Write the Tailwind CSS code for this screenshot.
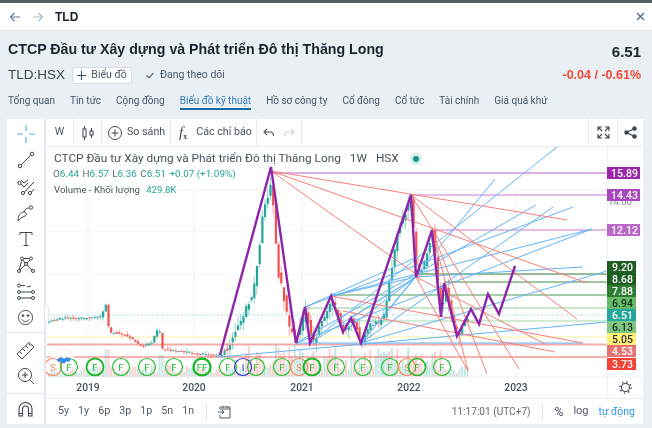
<!DOCTYPE html>
<html lang="vi">
<head>
  <meta charset="UTF-8">
  <title>TLD</title>
  <script src="https://cdn.jsdelivr.net/npm/@tailwindcss/browser@4"></script>
</head>
<body class="w-[652px] h-[428px] overflow-hidden bg-[#eaeff3] font-['Roboto','Liberation_Sans',sans-serif] text-[#3c4a5a] blur-[0.35px]">
  <div class="h-[3px] bg-[#5a5d60]"></div>

  <!-- thanh tren -->
  <div class="h-[28px] bg-white flex items-center pl-[9px] pr-[7px] border-b border-[#e2e6ea]">
    <svg class="w-[12px] h-[12px] text-[#5f7f9c]" viewBox="0 0 12 12" fill="none" stroke="currentColor" stroke-width="1.2"><path d="M11 6H1.5M5.5 2 1.5 6l4 4"/></svg>
    <svg class="w-[12px] h-[12px] ml-[11px] text-[#a9bac9]" viewBox="0 0 12 12" fill="none" stroke="currentColor" stroke-width="1.2"><path d="M1 6h9.5M6.5 2l4 4-4 4"/></svg>
    <span class="ml-[11px] text-[12px] font-bold text-[#17212b] font-['Liberation_Sans']">TLD</span>
    <svg class="ml-auto w-[9px] h-[9px] text-[#4e6b85]" viewBox="0 0 9 9" fill="none" stroke="currentColor" stroke-width="1.3"><path d="M1 1l7 7M8 1 1 8"/></svg>
  </div>

  <!-- tieu de -->
  <div class="h-[88px] px-[8px] pr-[11px] relative">
    <div class="flex items-center justify-between pt-[5px] h-[33px]">
      <h1 class="text-[14.2px] font-bold text-[#1b2530] font-['Liberation_Sans'] whitespace-nowrap">CTCP Đầu tư Xây dựng và Phát triển Đô thị Thăng Long</h1>
      <span class="text-[15px] font-bold text-[#1b2530] font-['Liberation_Sans'] mt-[4px]">6.51</span>
    </div>
    <div class="flex items-center h-[20px] mt-[1px]">
      <span class="text-[13.5px] text-[#3a4654] font-['Liberation_Sans']">TLD:HSX</span>
      <button class="ml-[7px] h-[17px] w-[60px] bg-white border border-[#d5dbe0] rounded-[2px] flex items-center justify-center gap-[5px] text-[10.5px] text-[#4a5a6a]">
        <svg class="w-[9px] h-[9px] text-[#33536f]" viewBox="0 0 9 9" fill="none" stroke="currentColor" stroke-width="1.1"><path d="M4.5 0v9M0 4.5h9"/></svg>
        Biểu đồ
      </button>
      <svg class="ml-[14px] w-[8px] h-[7px] text-[#33536f]" viewBox="0 0 8 7" fill="none" stroke="currentColor" stroke-width="1.1"><path d="M.6 3.5 3 5.8 7.4 1"/></svg>
      <span class="ml-[6px] text-[10.5px] text-[#4a5a6a]">Đang theo dõi</span>
      <span class="ml-auto text-[12.5px] font-bold text-[#f4473b] font-['Liberation_Sans']">-0.04 / -0.61%</span>
    </div>
    <div class="flex gap-[15px] mt-[4px] text-[10px] text-[#44566a] h-[25px]">
      <span class="pt-[4px]">Tổng quan</span>
      <span class="pt-[4px]">Tin tức</span>
      <span class="pt-[4px]">Cộng đồng</span>
      <span class="pt-[4px] text-[#2f7db9] border-b-2 border-[#1a6aa5] h-[21px]">Biểu đồ kỹ thuật</span>
      <span class="pt-[4px]">Hồ sơ công ty</span>
      <span class="pt-[4px]">Cổ đông</span>
      <span class="pt-[4px]">Cổ tức</span>
      <span class="pt-[4px]">Tài chính</span>
      <span class="pt-[4px]">Giá quá khứ</span>
    </div>
  </div>

  <!-- khung bieu do -->
  <div class="ml-[7px] w-[636px] h-[305px] bg-white flex">
    <!-- cong cu ben trai -->
    <div class="w-[39px] flex flex-col items-center border-r-2 border-[#e4e7f2] text-[#3b4650]">
      <div class="h-[214px] flex flex-col items-center justify-between pt-[6px] pb-[6px] w-full border-b border-[#e4e7ea]">
        <svg class="w-[18px] h-[18px] text-[#5ab0e8]" viewBox="0 0 18 18" fill="none" stroke="currentColor" stroke-width="1.2"><path d="M0 9h6M12 9h6M9 0v6M9 12v6"/></svg>
        <svg class="w-[18px] h-[18px]" viewBox="0 0 18 18" fill="none" stroke="currentColor"><circle cx="3" cy="15" r="1.8"/><circle cx="15" cy="3" r="1.8"/><path d="M4.3 13.7 13.7 4.3"/></svg>
        <svg class="w-[18px] h-[18px]" viewBox="0 0 18 18" fill="none" stroke="currentColor"><circle cx="2.5" cy="5" r="1.6"/><circle cx="6" cy="15" r="1.6"/><circle cx="13" cy="15" r="1.6"/><path d="M4 6l3 3M7.5 14 17 4M14.5 14 17 11M4 2l3 3 4-3M7 9l4-4"/></svg>
        <svg class="w-[18px] h-[18px]" viewBox="0 0 18 18" fill="none" stroke="currentColor"><path d="M1 17c0-5 2-9 6-9 3 0 3 3 1 4-3 1.500-5 2-7 5zM7 8c1-3 3-4 5-4"/><circle cx="14" cy="3.500" r="1.700"/></svg>
        <svg class="w-[18px] h-[18px]" viewBox="0 0 18 18" fill="none" stroke="currentColor"><path d="M3 5V2.500h12V5M9 2.500v13M6.500 15.500h5"/></svg>
        <svg class="w-[18px] h-[18px]" viewBox="0 0 18 18" fill="none" stroke="currentColor"><circle cx="5" cy="2.500" r="1.500"/><circle cx="14" cy="2.500" r="1.500"/><circle cx="2" cy="15" r="1.500"/><circle cx="16" cy="15" r="1.500"/><circle cx="9" cy="8" r="1.500"/><path d="M4.800 4 2.300 13.500M6.500 2.500h6M6 4l2 3M13 4l-3 3M10 9.200l5 4.800M8 9.300l-5 4.800"/></svg>
        <svg class="w-[18px] h-[18px]" viewBox="0 0 18 18" fill="none" stroke="currentColor"><circle cx="2" cy="2.500" r="1.500"/><circle cx="2" cy="9" r="1.500"/><circle cx="2" cy="15" r="1.500"/><circle cx="16" cy="9" r="1.500"/><circle cx="16" cy="15" r="1.500"/><path d="M3.500 2.500H8M3.500 9h11M3.500 15h11M10 4l4-1" /></svg>
        <svg class="w-[17px] h-[17px]" viewBox="0 0 18 18" fill="none" stroke="currentColor"><circle cx="9" cy="9" r="7.500"/><circle cx="6.300" cy="7" r=".9" fill="currentColor"/><circle cx="11.700" cy="7" r=".9" fill="currentColor"/><path d="M5 11c1.500 3 6.500 3 8 0"/></svg>
      </div>
      <div class="h-[61px] flex flex-col items-center justify-center gap-[7px] w-full border-b border-[#e4e7ea]">
        <svg class="w-[19px] h-[19px]" viewBox="0 0 19 19" fill="none" stroke="currentColor"><path d="M1 13 13 1.500 18 6 6 18zM4 11l2 2M7 8l2 2M10 5l2 2M13 3l1.500 1.500"/></svg>
        <svg class="w-[18px] h-[18px]" viewBox="0 0 18 18" fill="none" stroke="currentColor"><circle cx="8" cy="8" r="6.500"/><path d="M8 5v6M5 8h6M13 13l4 4" /></svg>
      </div>
      <div class="flex-1 flex items-center justify-center w-full">
        <svg class="w-[15px] h-[15px]" viewBox="0 0 15 15" fill="none" stroke="currentColor" stroke-width="1.1"><path d="M1 14V7a6.500 6.500 0 0 1 13 0v7h-3.500V7a3 3 0 0 0-6 0v7zM1 11.500h3.500M10.500 11.500H14"/></svg>
      </div>
    </div>

    <!-- vung bieu do -->
    <div class="flex-1 flex flex-col min-w-0">
      <div class="h-[28px] flex items-center border-b border-[#e8ecef] text-[10.7px] text-[#46525e] shrink-0">
        <div class="w-[28px] h-full flex items-center justify-center border-r border-[#e8ecef]">W</div>
        <div class="w-[28px] h-full flex items-center justify-center border-r border-[#e8ecef]">
          <svg class="w-[12px] h-[14px] text-[#3b4650]" viewBox="0 0 12 14" fill="none" stroke="currentColor"><rect x="1" y="3" width="3" height="8"/><rect x="8" y="5" width="3" height="4"/><path d="M2.500 0v3M2.500 11v3M9.500 2v3M9.500 9v3"/></svg>
        </div>
        <div class="w-[69px] h-full flex items-center pl-[6px] gap-[5px] border-r border-[#e8ecef]">
          <svg class="w-[14px] h-[14px] text-[#3b4650]" viewBox="0 0 14 14" fill="none" stroke="currentColor"><circle cx="7" cy="7" r="6.500"/><path d="M7 3.500v7M3.500 7h7"/></svg>
          So sánh
        </div>
        <div class="w-[86px] h-full flex items-center pl-[8px] gap-[9px] border-r border-[#e8ecef]">
          <span class="italic font-['Liberation_Serif'] text-[15px] leading-none text-[#3b4650]">f<sub class="text-[8px] not-italic font-bold">x</sub></span>
          Các chỉ báo
        </div>
        <div class="w-[45px] h-full flex items-center justify-center gap-[10px] border-r border-[#e8ecef]">
          <svg class="w-[11px] h-[9px] text-[#4b5863]" viewBox="0 0 11 9" fill="none" stroke="currentColor" stroke-width="1.1"><path d="M4 1 1 4l3 3M1 4h6a3.500 3.500 0 0 1 3.500 4"/></svg>
          <svg class="w-[11px] h-[9px] text-[#cfd6dc]" viewBox="0 0 11 9" fill="none" stroke="currentColor" stroke-width="1.1"><path d="M7 1l3 3-3 3M10 4H4A3.500 3.500 0 0 0 .500 8"/></svg>
        </div>
        <div class="ml-auto w-[29px] h-full flex items-center justify-center border-l border-[#e8ecef]">
          <svg class="w-[13px] h-[13px] text-[#3b4650]" viewBox="0 0 13 13" fill="none" stroke="currentColor" stroke-width="1.1"><path d="M1 5V1h4M1 1l4 4M12 5V1H8M12 1 8 5M1 8v4h4M1 12l4-4M12 8v4H8M12 12 8 8"/></svg>
        </div>
        <div class="w-[26px] h-full flex items-center justify-center border-l border-[#e8ecef]">
          <svg class="w-[13px] h-[13px] text-[#3b4650]" viewBox="0 0 13 13" fill="currentColor"><circle cx="2.500" cy="6.500" r="2.200"/><circle cx="10.500" cy="2.500" r="2.200"/><circle cx="10.500" cy="10.500" r="2.200"/><path d="M2.500 6.500 10.500 2.500M2.500 6.500l8 4" stroke="currentColor" stroke-width="1.300"/></svg>
        </div>
      </div>

      <div class="relative h-[251px] shrink-0">
        <svg id="chart" class="absolute inset-0 w-full h-full" viewBox="46 147 597 251" font-family="Roboto, Liberation Sans, sans-serif"></svg>
        <div class="absolute left-[8px] top-[3px] text-[11.8px] text-[#46525e] whitespace-nowrap flex items-center">
          CTCP Đầu tư Xây dựng và Phát triển Đô thị Thăng Long<span class="ml-[9px]">1W</span><span class="ml-[9px]">HSX</span>
          <span class="ml-[11px] w-[12px] h-[12px] rounded-full bg-[#d5efec] flex items-center justify-center"><span class="w-[6px] h-[6px] rounded-full bg-[#159a8b]"></span></span>
        </div>
        <div class="absolute left-[7px] top-[20px] text-[9.9px] whitespace-nowrap text-[#26a69a]">
          <span class="text-[#5e6c78]">O</span>6.44 <span class="text-[#5e6c78] ml-[1px]">H</span>6.57 <span class="text-[#5e6c78] ml-[1px]">L</span>6.36 <span class="text-[#5e6c78] ml-[1px]">C</span>6.51 <span class="ml-[1px]">+0.07 (+1.09%)</span>
        </div>
        <div class="absolute left-[8px] top-[36px] text-[9.6px] whitespace-nowrap text-[#46525e]">
          Volume - Khối lượng <span class="ml-[4px] text-[#26a69a]">429.8K</span>
        </div>
        <button class="absolute left-[-2px] top-[159px] w-[5px] h-[16px] bg-white border border-[#e4e7ea] rounded-[2px] text-[6px] leading-none text-[#9aa5ae]">‹</button>
      </div>

      <div class="flex-1 flex items-center border-t border-[#e8ecef] text-[10.7px] text-[#4f5c68]">
        <div class="flex gap-[9px] pl-[12px] w-[161px] border-r border-[#e0e4e8] h-[16px] items-center">
          <span>5y</span><span>1y</span><span>6p</span><span>3p</span><span>1p</span><span>5n</span><span>1n</span>
        </div>
        <svg class="ml-[10px] w-[14px] h-[14px] text-[#4f5c68]" viewBox="0 0 14 14" fill="none" stroke="currentColor"><path d="M3 4V2h10v11H3v-3M1 7h6M5 5l2 2-2 2M3 4h10M6 1v2M10 1v2"/></svg>
        <span class="ml-auto text-[10.1px] text-[#5d6873]">11:17:01 (UTC+7)</span>
        <span class="ml-[11px] h-[16px] border-l border-[#e0e4e8]"></span>
        <span class="ml-[12px] text-[12px] text-[#414d58]">%</span>
        <span class="ml-[10px] text-[11px]">log</span>
        <span class="ml-[10px] mr-[8px] text-[10.5px] text-[#2f96ec]">tự động</span>
      </div>
    </div>
  </div>

  <script>
    const svg = document.getElementById('chart');
    const NS = 'http://www.w3.org/2000/svg';
    function add(tag, attrs, text) {
      const el = document.createElementNS(NS, tag);
      for (const k in attrs) el.setAttribute(k, attrs[k]);
      if (text) el.textContent = text;
      svg.appendChild(el);
      return el;
    }
    function line(x1, y1, x2, y2, stroke, w, extra) {
      add('line', Object.assign({ x1, y1, x2, y2, stroke, 'stroke-width': w || 1 }, extra || {}));
    }

    let seed = 17;
    function rnd() {
      seed = (seed * 16807) % 2147483647;
      return seed / 2147483647;
    }

    // luoi
    [88, 194, 302, 409, 516].forEach(x => line(x, 190, x, 377, '#f1f3f5'));
    [190, 231, 275, 320].forEach(y => line(47, y, 607, y, '#f4f6f7'));

    // duong ngang
    line(47, 315, 607, 315, '#8fd3cc', 1, { 'stroke-dasharray': '1 1.5' });
    line(47, 337, 607, 337, '#fdf3a0', 1.2);
    line(47, 344.5, 607, 344.5, '#f4a9a9', 2);
    line(47, 357, 607, 357, '#f79a95', 1.5);
    line(271, 173, 607, 173, '#cf93dc', 1.6);
    line(411, 195, 607, 195, '#dba7e3', 1.4);
    line(432, 230, 607, 230, '#dda9e4', 1.4);
    line(415, 274, 607, 274, '#2f7a34', 1);
    line(444, 282, 607, 282, '#3f8a45', 1);
    line(331, 295, 607, 295, '#4d9a52', 1);
    line(305, 308, 607, 308, '#93cf96', 1);
    line(351, 321, 607, 321, '#a5dba8', 1);

    // khoi luong
    for (let x = 48; x < 469; x += 2.7) {
      let h = 4 + rnd() * 8;
      if (x > 245 && x < 300) h = 8 + rnd() * 26;
      else if (x > 300 && x < 440) h = 5 + rnd() * 24;
      if (Math.abs(x - 106) < 2) h = 28;
      if (Math.abs(x - 160) < 2) h = 22;
      add('rect', { x, y: 377 - h, width: 2, height: h, fill: rnd() > 0.5 ? '#26a69a' : '#ef5350', opacity: 0.27 });
    }

    // nen gia
    const path = [[47,322],[60,318],[75,318],[90,318],[100,317],[105,303],[108,333],[115,333],[125,335],[140,346],[150,343],[158,327],[161,349],[175,351],[200,354],[220,355],[227,347],[243,313],[252,293],[258,250],[262,210],[270,185],[273,217],[277,273],[282,293],[287,323],[295,342],[305,310],[312,343],[331,298],[343,332],[351,318],[361,343],[367,327],[382,320],[388,283],[397,230],[411,197],[413,240],[416,277],[425,260],[432,230],[437,290],[441,315],[444,285],[450,315],[457,335],[463,325],[469,312]];
    function priceAt(x) {
      for (let i = 1; i < path.length; i++) {
        if (x <= path[i][0]) {
          const t = (x - path[i - 1][0]) / (path[i][0] - path[i - 1][0]);
          return path[i - 1][1] + t * (path[i][1] - path[i - 1][1]);
        }
      }
      return path[path.length - 1][1];
    }
    for (let x = 48; x < 469; x += 2.7) {
      const a = priceAt(x - 2.7), b = priceAt(x);
      const amp = x > 225 ? 6 : 2;
      const o = a + (rnd() - 0.5) * amp, c = b + (rnd() - 0.5) * amp;
      const top = Math.min(o, c), bot = Math.max(o, c);
      const col = c < o ? '#26a69a' : '#ef5350';
      line(x + 1, top - rnd() * amp * 1.6, x + 1, bot + rnd() * amp * 1.6, col, 1, { opacity: 0.5 });
      add('rect', { x, y: top, width: 2.2, height: Math.max(bot - top, 1), fill: col });
    }

    // tia xanh
    const blue = [
      [310,343,557,147],[361,343,495,179],[296,343,536,205],[361,343,553,207],[305,307,573,207],
      [331,296,592,229],[296,343,592,229],[416,277,583,267],[361,343,607,271],[220,357,607,322],[296,343,583,343],
      [305,307,417,257],[310,343,416,277],[331,296,416,277],[361,343,416,277],[351,318,416,277],[343,332,416,277]
    ];
    blue.forEach(l => line(l[0], l[1], l[2], l[3], '#62b4f6', 1));

    // tia do
    const red = [
      [271,171,567,220],[271,171,587,283],[271,171,420,277],[411,195,577,319],[416,277,545,344],
      [331,296,583,343],[343,311,555,352],[411,195,519,369],[432,230,487,374],[432,230,468,371],[416,277,468,371]
    ];
    red.forEach(l => line(l[0], l[1], l[2], l[3], '#f77f79', 1));

    // dinh day tim
    add('polyline', {
      points: '220,355 271,167 296,343 305,307 310,343 331,296 343,332 351,318 361,343 411,195 416,277 432,230 441,317 444,283 457,336 471,309 479,324 488,294 499,314 515,266',
      fill: 'none', stroke: '#8e24aa', 'stroke-width': 2.4, 'stroke-linejoin': 'miter'
    });

    // su kien
    add('circle', { cx: 62, cy: 362, r: 13, fill: 'white', opacity: 0.75, stroke: '#e6e9ec' });
    const events = [
      [53,'S','#f98a5c',1.2],[69,'F','#22c32e',1.2],[95,'F','#19b826',1.8],[121,'F','#22c32e',1.2],[147,'F','#22c32e',1.2],
      [174,'F','#22c32e',1.2],[202,'FF','#19b826',2.4],[228,'F','#22c32e',1.2],[243,'I','#2f35e0',1.2],[256,'F','#22c32e',1.2],
      [282,'F','#22c32e',1.2],[299,'S','#f98a5c',1.2],[312,'F','#19b826',2],[336,'F','#22c32e',1.2],[363,'F','#22c32e',1.2],
      [390,'F','#22c32e',1.2],[407,'S','#f98a5c',1.2],[417,'F','#19b826',1.6],[442,'F','#22c32e',1.2]
    ];
    events.forEach(e => {
      add('circle', { cx: e[0], cy: 367, r: 8.5, fill: 'none', stroke: e[2], 'stroke-width': e[3] });
      add('text', { x: e[0], y: 370.5, 'text-anchor': 'middle', 'font-size': 9.5, fill: e[2] }, e[1]);
    });
    add('path', { d: 'M57 360c2-3 5-3 7-1 2-2 5-2 7 0l-2 3c-2-1-3-1-4 1-2 1-4 0-5-2l-2 1z', fill: '#2f8fe8' });

    // truc gia
    line(607, 146, 607, 398, '#e8ecef');
    line(47, 377, 643, 377, '#eceff2');
    add('text', { x: 620, y: 205, 'text-anchor': 'middle', 'font-size': 9.5, fill: '#7c8790' }, '14.00');
    const tags = [
      [173,'15.89','#9c27a8','#fff',33],[195,'14.43','#ab47bc','#fff',33],[230,'12.12','#ba68c8','#fff',33],
      [267,'9.20','#1f5f24','#fff',29],[279,'8.68','#1b5e20','#fff',29],[291,'7.88','#2e7d32','#fff',29],
      [303,'6.94','#66bb6a','#12301a',29],[315,'6.51','#26a69a','#fff',29],[327,'6.13','#81c784','#12301a',29],
      [339,'5.05','#fff176','#333',29],[351,'4.53','#e57373','#fff',29],[364,'3.73','#f44336','#fff',29]
    ];
    tags.forEach(t => {
      add('rect', { x: 607, y: t[0] - 6, width: t[4], height: 12, fill: t[2] });
      add('text', { x: 607 + t[4] / 2 + 1, y: t[0] + 3.7, 'text-anchor': 'middle', 'font-size': 10.5, 'font-weight': 500, fill: t[3] }, t[1]);
    });

    // truc thoi gian
    [[88,'2019'],[194,'2020'],[302,'2021'],[409,'2022'],[516,'2023']].forEach(t => {
      add('text', { x: t[0], y: 391, 'text-anchor': 'middle', 'font-size': 10.3, 'font-weight': 500, fill: '#46525e' }, t[1]);
    });
    // nut cai dat
    add('circle', { cx: 625.500, cy: 387.500, r: 4, fill: 'none', stroke: '#3b4650', 'stroke-width': 1.1 });
    add('circle', { cx: 625.500, cy: 387.500, r: 5.6, fill: 'none', stroke: '#3b4650', 'stroke-width': 1.4, 'stroke-dasharray': '1.500 2.900' });
  </script>
</body>
</html>
